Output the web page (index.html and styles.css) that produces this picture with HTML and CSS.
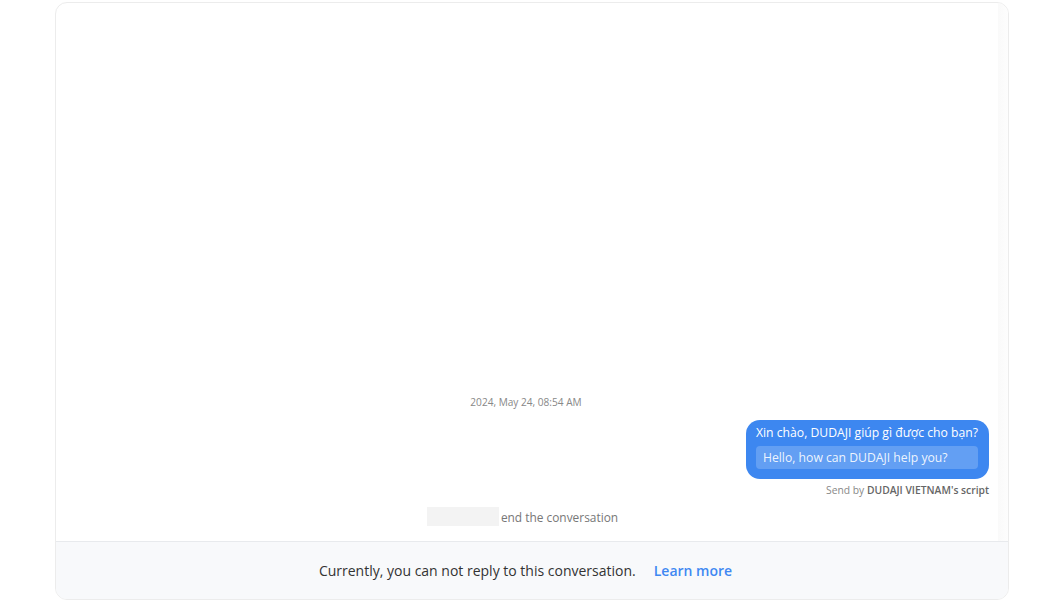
FILE: index.html
```html
<!DOCTYPE html>
<html lang="vi">
<head>
  <meta charset="UTF-8">
  <title>Conversation</title>
  <link rel="stylesheet" href="styles.css">
</head>
<body>
<div class="chat-card">
  <div class="chat-body">
    <div class="messages">
      <div class="timestamp">2024, May 24, 08:54 AM</div>

      <!-- tin nhắn gửi đi -->
      <div class="msg-row">
        <div class="bubble">
          <div class="bubble-text">Xin chào, DUDAJI giúp gì được cho bạn?</div>
          <div class="translation">Hello, how can DUDAJI help you?</div>
        </div>
      </div>
      <div class="sender">Send by <b>DUDAJI VIETNAM's script</b></div>

      <div class="system-line">
        <span class="name-hidden"></span>
        <span>end the conversation</span>
      </div>
    </div>
    <div class="scroll-track"></div>
  </div>
  <div class="chat-footer">
    <span>Currently, you can not reply to this conversation.</span>
    <a href="#" class="learn-more">Learn more</a>
  </div>
</div>
</body>
</html>
```

FILE: styles.css
```css
* { box-sizing: border-box; }
body {
  font-family: 'Open Sans', 'Noto Sans', sans-serif;
  background-color: #fff;
  margin: 0;
  padding: 0;
}
.chat-card {
  width: 954px;
  height: 598px;
  margin: 2px 0 0 55px;
  border: 1px solid #ececec;
  border-radius: 12px;
  overflow: hidden;
  display: flex;
  flex-direction: column;
}
.chat-body {
  flex: 1;
  display: flex;
}
.messages {
  flex: 1;
  display: flex;
  flex-direction: column;
  justify-content: flex-end;
  padding: 0 9px 15px 10px;
}
.scroll-track {
  width: 10px;
  background: linear-gradient(to right, #fafafa, #fdfdfd);
}
.timestamp {
  text-align: center;
  font-size: 10.1px;
  color: #888;
  line-height: 16px;
  margin-bottom: 10px;
  padding-right: 3px;
}
.msg-row {
  display: flex;
  justify-content: flex-end;
}
.bubble {
  background-color: #3d87f0;
  color: #fff;
  border-radius: 14px;
  padding: 4px 11px 10px 10px;
  font-size: 12.2px;
}
.bubble-text {
  line-height: 18px;
  margin-bottom: 4px;
}
.translation {
  background-color: rgba(255, 255, 255, 0.2);
  color: rgba(255, 255, 255, 0.9);
  border-radius: 4px;
  padding: 2px 7px;
  line-height: 19px;
}
.sender {
  text-align: right;
  font-size: 10.3px;
  color: #888;
  line-height: 16px;
  margin-top: 3px;
}
.sender b {
  color: #666;
  font-weight: 600;
}
.system-line {
  display: flex;
  justify-content: center;
  align-items: center;
  margin-top: 9px;
  font-size: 11.9px;
  color: #777;
  padding-right: 10px;
}
.name-hidden {
  display: inline-block;
  width: 72px;
  height: 19px;
  background-color: #f3f3f3;
  margin-right: 2px;
}
.chat-footer {
  height: 58px;
  border-top: 1px solid #e8eaed;
  background-color: #f8f9fb;
  display: flex;
  justify-content: center;
  align-items: center;
  font-size: 14px;
  color: #333;
  padding-right: 13px;
}
a.learn-more {
  margin-left: 18px;
  color: #3f88f2;
  text-decoration: none;
  font-weight: 600;
}
```
